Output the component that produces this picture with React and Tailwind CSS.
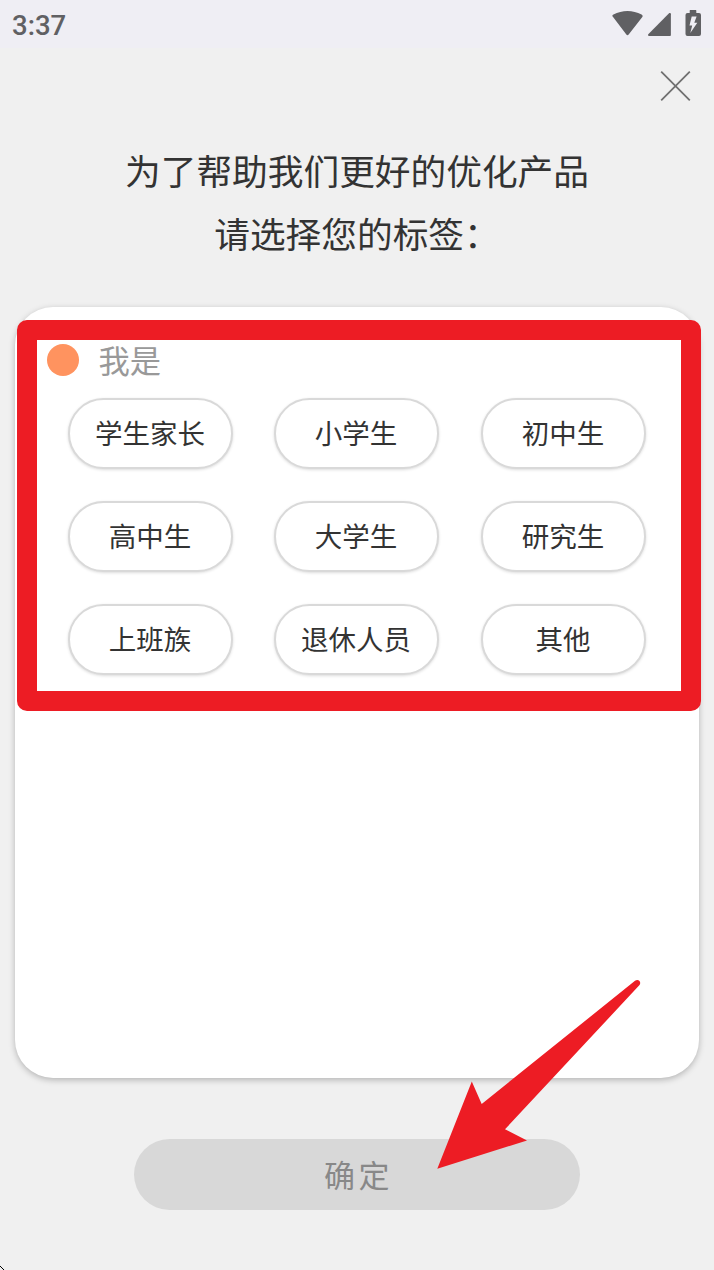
import React from 'react';

const tags = [
  '学生家长',
  '小学生',
  '初中生',
  '高中生',
  '大学生',
  '研究生',
  '上班族',
  '退休人员',
  '其他',
];

const StatusBar = () => (
  <div className="flex h-12 items-start justify-between bg-[#efeef4] pl-3 pr-[13px] text-[#606063]">
    <span className="pt-[9px] font-['Roboto',sans-serif] text-[27.5px] font-medium leading-[33px]">3:37</span>
    <div className="flex pt-[10px]">
      <svg className="h-[26px] w-[31px]" viewBox="0 0 32 26" preserveAspectRatio="none" fill="currentColor">
        <path d="M1.3 7.2C-.1 6.1.2 5.2 1.5 4.5C10.5-.2 21.5-.2 30.5 4.5C31.8 5.2 32.1 6.1 30.9 7.4L17.2 24.4C16.4 25.4 15.6 25.4 14.8 24.4Z" />
      </svg>
      <svg className="ml-[5px] h-[26px] w-[24px]" viewBox="0 0 24 26" fill="currentColor">
        <path d="M1.2 26C-.1 26-.4 24.9.5 23.9L20.8 3.4C21.7 2.5 22.9 2.9 22.9 4.2V24.8C22.9 25.6 22.5 26 21.7 26Z" />
      </svg>
      <svg className="ml-[13px] h-[26px] w-[16px]" viewBox="0 0 16 26" fill="currentColor">
        <path
          fillRule="evenodd"
          d="M5.2 0H10.8Q11.3 0 11.3 .6V3H14Q16 3 16 5V24Q16 26 14 26H2.5Q.5 26 .5 24V5Q.5 3 2.5 3H4.7V.6Q4.7 0 5.2 0ZM6.7 6.5L4.5 15.5H7.2L5.3 23L12.3 12.8H9.3L11.6 6.5Z"
        />
      </svg>
    </div>
  </div>
);

const Tag = ({ label }) => (
  <button
    type="button"
    className="h-[71px] w-[165px] rounded-full border-2 border-[#d9d9d9] bg-white pb-px pr-px text-[27.5px] leading-none text-[#333333] shadow-[0_1px_3px_rgba(0,0,0,0.14)]"
  >
    {label}
  </button>
);

const App = () => {
  return (
    <div className="relative flex h-[1270px] w-[714px] flex-col overflow-hidden bg-[#f0f0f0] font-['Noto_Sans_CJK_SC',sans-serif]">
      <StatusBar />

      <header className="flex h-[259px] flex-col">
        <button type="button" aria-label="关闭" className="mr-[22px] mt-[22px] self-end">
          <svg className="h-8 w-8" viewBox="0 0 32 32" stroke="#707070" strokeWidth="1.8" fill="none">
            <path d="M1.2 1.7L29.8 30.3M29.8 1.7L1.2 30.3" />
          </svg>
        </button>
        <h1 className="mt-9 text-center text-[35.7px] leading-[63px] text-[#333333]">
          为了帮助我们更好的优化产品
          <br />
          请选择您的标签：
        </h1>
      </header>

      <main className="mx-[15px] h-[771px] rounded-[38px] bg-white pt-[33px] shadow-[0_2px_6px_rgba(0,0,0,0.25)]">
        <div className="flex h-10 items-center pl-8">
          <span className="h-8 w-8 rounded-full bg-[#ff935f]" />
          <span className="ml-[19.5px] text-[31.3px] leading-10 text-[#999999]">我是</span>
        </div>
        <div className="ml-[53px] mt-[18px] grid w-[578px] grid-cols-[206px_207px_165px] gap-y-8">
          {tags.map((tag) => (
            <Tag key={tag} label={tag} />
          ))}
        </div>
      </main>

      <button
        type="button"
        className="mx-auto mt-[61px] h-[71px] w-[446px] rounded-full bg-[#d8d8d8] pb-[3px] pl-[3px] text-[31px] leading-none tracking-[3.5px] text-[#888888]"
      >
        确定
      </button>

      {/* highlight frame and pointer drawn over the page */}
      <div className="absolute left-[17px] top-[320px] h-[391px] w-[684px] rounded-[10px] border-[20px] border-[#ed1c24]" />
      <svg
        className="absolute left-[430px] top-[970px] h-[210px] w-[220px]"
        viewBox="430 970 220 210"
        fill="#ed1c24"
      >
        <path d="M437.3 1168.7L471.8 1081.5L481.7 1104L635 980.8Q637.5 979 639.5 981Q641 983 639.3 985.3L505 1129.3L527 1140.5Z" />
      </svg>
      <svg className="absolute bottom-0 left-0 h-1 w-1" viewBox="0 0 4 4" fill="#000000">
        <path d="M0 0H1V1H0ZM1 1H2V2H1ZM2 2H3V3H2ZM3 3H4V4H3Z" />
      </svg>
    </div>
  );
};

export default App;
